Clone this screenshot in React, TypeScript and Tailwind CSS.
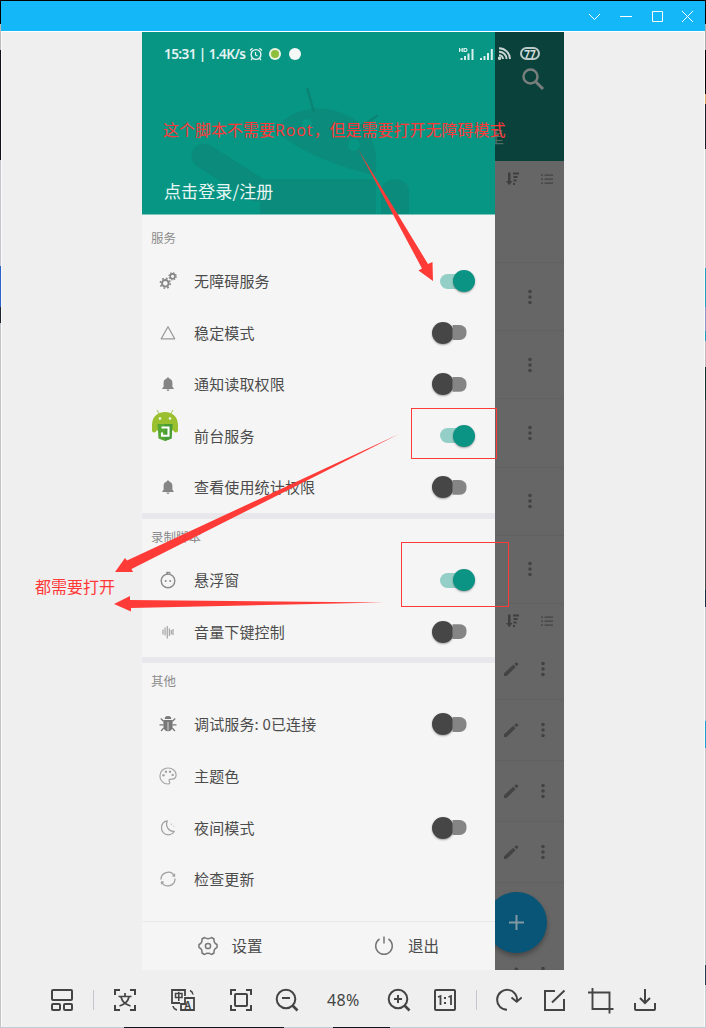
import React from "react";

type IconProps = { children: React.ReactNode; size?: number; className?: string; box?: number };

function Icon({ children, size = 18, box = 18, className = "" }: IconProps) {
  return (
    <svg
      width={size}
      height={size}
      viewBox={`0 0 ${box} ${box}`}
      fill="none"
      stroke="currentColor"
      strokeLinejoin="round"
      className={`shrink-0 ${className}`}
    >
      {children}
    </svg>
  );
}

const gears = (
  <Icon className="text-[#858585]">
    <circle cx="6.3" cy="11.3" r="3.3" strokeWidth="1.9" />
    <circle cx="6.3" cy="11.3" r="5" strokeWidth="1.5" strokeDasharray="1.8 2.13" />
    <circle cx="13.600" cy="4.3" r="2.4" strokeWidth="1.6" />
    <circle cx="13.600" cy="4.3" r="3.6" strokeWidth="1.2" strokeDasharray="1.5 1.33" />
  </Icon>
);
const triangle = (
  <Icon className="text-[#9b9b9b]">
    <path d="M9 2.8 L15.7 14.8 H2.2 Z" strokeWidth="1.3" />
  </Icon>
);
const bell = (
  <Icon className="text-[#858585]">
    <path
      d="M9 2.4c.8 0 1.3.5 1.3 1.2 2 .6 3.1 2.2 3.1 4.4v3.8l1.3 1.4v.7H3.3v-.7l1.3-1.4V8c0-2.200 1.100-3.800 3.100-4.400 0-.7.5-1.200 1.300-1.200zM7.500 14.600h3c0 .8-.6 1.300-1.500 1.300s-1.500-.5-1.500-1.300z"
      fill="currentColor"
      stroke="none"
    />
  </Icon>
);
const face = (
  <Icon className="text-[#8b8b8b]">
    <circle cx="9" cy="9.900" r="6.800" strokeWidth="1.400" />
    <path d="M9.200 3.300c-1.900-.3-2-2.200-.2-2.100 1.300 0 2.200.7 2 1.500" strokeWidth="1.400" />
    <circle cx="6.700" cy="9.900" r="1" fill="currentColor" stroke="none" />
    <circle cx="11.200" cy="9.900" r="1" fill="currentColor" stroke="none" />
  </Icon>
);
const wave = (
  <Icon className="text-[#aaaaaa]">
    <path d="M4 6.500v5M6.100 4.500v8M8.300 3v12.500M10.400 5.500v7.500M12.300 7v4.500M14 6v6" strokeWidth="1.300" />
  </Icon>
);
const bug = (
  <Icon className="text-[#777777]">
    <path d="M5.700 4.100a3.300 3.100 0 0 1 6.600 0z" fill="currentColor" stroke="none" />
    <path
      d="M4.400 5h9.200v6.500c0 2.800-2 4.800-4.600 4.800s-4.600-2-4.600-4.800z"
      fill="currentColor"
      stroke="none"
    />
    <path d="M9 7v8.500" stroke="#d9d9d9" strokeWidth="1" />
    <path d="M4.500 6.300 1.800 3.500M13.500 6.300l2.700-2.800M4.400 9.800H.5M13.600 9.800h3.900M4.800 12.800l-2.700 3.200M13.200 12.800l2.700 3.200" strokeWidth="1.300" />
  </Icon>
);
const palette = (
  <Icon className="text-[#a5a5a5]">
    <path
      d="M9 17C4.300 17 .9 13.400.9 8.900.9 4.300 4.500 1 9.100 1c4.500 0 8 3 8 6.800 0 2.700-1.900 4.400-4.100 4.400-1.500 0-2.700-.1-3 .8-.3 1 1.200 1.600.7 3-.2.700-.8 1-1.700 1z"
      strokeWidth="1.200"
    />
    <g fill="currentColor" stroke="none">
      <circle cx="4.500" cy="8.300" r="1.200" />
      <circle cx="6.900" cy="4.800" r="1.200" />
      <circle cx="11" cy="4.700" r="1.200" />
      <circle cx="13.700" cy="7.900" r="1.200" />
    </g>
  </Icon>
);
const moon = (
  <Icon className="text-[#a0a0a0]">
    <path d="M8.300 1.800C4.700 2.400 2.500 5.300 2.500 8.800c0 4.100 3 7 6.700 7 2.700 0 4.800-1.200 6.100-3.500-5.400.5-9.300-4.900-7-10.500z" strokeWidth="1.200" />
    <path d="M12.400 4.500v1.500M14.800 6.700v1" strokeWidth=".7" />
  </Icon>
);
const sync = (
  <Icon className="text-[#a0a0a0]">
    <path d="M2 9.600A7.100 7.100 0 0 1 15.300 5.900M16 8.500A7.100 7.100 0 0 1 2.700 12.200" strokeWidth="1.300" />
    <path d="M15.600 3.800v2.400l-2.400-.2M2.400 14.300v-2.400l2.400.2" strokeWidth="1.100" />
  </Icon>
);

function RobotBadge() {
  return (
    <svg width="28" height="34" viewBox="0 0 28 34" className="-mt-[19px] -ml-[8px] shrink-0">
      <path d="M6 1l3 5M22 1l-3 5" stroke="#b6cf79" strokeWidth="1.200" />
      <path d="M1 16C1 8 6.500 3 14 3s13 5 13 13v5.500c0 2.500-4 2.500-4.500 0H5.500C5 24 1 24 1 21.500z" fill="#9bc02f" />
      <circle cx="9" cy="9.500" r="1.300" fill="#f4f8e8" />
      <circle cx="19" cy="9.500" r="1.300" fill="#f4f8e8" />
      <path d="M6.500 15h15l-1 14.500L14 32l-6.500-2.500z" fill="#55a832" />
      <path d="M14 15h7.500l-1 14.500L14 32z" fill="#479c36" />
      <path d="M10.500 18.500h7v8.200l-6.500 0v-3.200" fill="none" stroke="#fff" strokeWidth="2.100" />
    </svg>
  );
}

function Toggle({ on }: { on: boolean }) {
  return on ? (
    <span className="flex h-[22px] w-[35px] items-center">
      <span className="h-[15px] w-[24px] rounded-l-full bg-[#94cfc7]" />
      <span className="-ml-[11px] size-[22px] shrink-0 rounded-full bg-[#0b9383] shadow-[0_1px_2px_rgba(0,0,0,0.35)]" />
    </span>
  ) : (
    <span className="mr-[8px] flex h-[22px] w-[35px] items-center">
      <span className="size-[22px] shrink-0 rounded-full bg-[#464646] shadow-[0_1px_2px_rgba(0,0,0,0.35)]" />
      <span className="-ml-[11px] h-[15px] w-[24px] rounded-r-full bg-[#858585] [clip-path:inset(0_0_0_10px)]" />
    </span>
  );
}

type Item = { icon: React.ReactNode; label: string; on?: boolean };

const sections: { title: string; items: Item[] }[] = [
  {
    title: "服务",
    items: [
      { icon: gears, label: "无障碍服务", on: true },
      { icon: triangle, label: "稳定模式", on: false },
      { icon: bell, label: "通知读取权限", on: false },
      { icon: <RobotBadge />, label: "前台服务", on: true },
      { icon: bell, label: "查看使用统计权限", on: false },
    ],
  },
  {
    title: "录制脚本",
    items: [
      { icon: face, label: "悬浮窗", on: true },
      { icon: wave, label: "音量下键控制", on: false },
    ],
  },
  {
    title: "其他",
    items: [
      { icon: bug, label: "调试服务: 0已连接", on: false },
      { icon: palette, label: "主题色" },
      { icon: moon, label: "夜间模式", on: false },
      { icon: sync, label: "检查更新" },
    ],
  },
];

function DrawerHeader() {
  return (
    <div className="grid h-[183px] shrink-0 overflow-hidden border-b border-[#7dc5bc] bg-[#089684]">
      <svg width="353" height="182" viewBox="142 32 353 182" className="col-start-1 row-start-1">
        <g fill="#0a8b7b">
          <path d="M204 156 L256 189" stroke="#0a8b7b" strokeWidth="25" strokeLinecap="round" fill="none" />
          <path d="M260 179h110q6 0 6 6v34H260z" />
          <path d="M381 214v-22c0-17 28-17 28 0v22z" />
          <path d="M274 129c18-20 42-24 62-18 26 8 43 25 40 61l-7 2c-35-9-72-23-95-45z" />
        </g>
        <path d="M307.500 89l6 22M377 116l-20 13" stroke="#0a8475" strokeWidth="2.600" strokeLinecap="round" />
        <circle cx="307" cy="124" r="5" fill="#089684" />
        <circle cx="354" cy="145" r="6" fill="#089684" />
      </svg>
      <div className="col-start-1 row-start-1 flex flex-col justify-between pl-[22px]">
        <div className="mt-[11px] flex h-[22px] items-center text-white/90">
          <span className="w-[83px] whitespace-nowrap font-['Noto_Sans','Noto_Sans_CJK_SC',sans-serif] text-[13.500px] leading-[22px] font-semibold tracking-[-0.550px]">
            15:31 | 1.4K/s
          </span>
          <Icon size={14} box={14} className="ml-[2px]">
            <circle cx="7" cy="7.500" r="4.900" strokeWidth="1.400" />
            <path d="M6.500 5v3l2 1M1 3.500 3.600 1.200M13 3.500l-2.600-2.300M3.300 11.500 2 13M10.700 11.500 12 13" strokeWidth="1.200" />
          </Icon>
          <span className="ml-[6px] flex size-[12px] items-center justify-center rounded-full bg-[#edf3e0]">
            <span className="size-[8px] rounded-full bg-[#8fbe3b]" />
          </span>
          <span className="ml-[8px] size-[12px] rounded-full bg-[#f5f8f7]" />
          <svg width="36" height="14" viewBox="0 0 36 14" className="ml-[158px] fill-white/85">
            <path d="M1.500 13h2v-2h-2zM5 13h2V9H5zM8.500 13h2V6.500h-2zM12.500 13h2V2h-2zM21 13h2v-2h-2zM24.500 13h2V9h-2zM28 13h2V6h-2zM31.800 13h2V2h-2z" />
            <path d="M.5 1v4M3.200 1v4M.5 3h2.700M5 1.500h1.500q1.500 0 1.500 1.500t-1.500 1.500H5z" fill="none" stroke="#dff2ef" strokeWidth="1.200" />
          </svg>
        </div>
        <div className="mb-[11px] text-[17px] leading-[24px] tracking-[0.1px] text-[#e9f6f4]">点击登录/注册</div>
      </div>
    </div>
  );
}

function Drawer() {
  return (
    <div className="flex w-[353px] shrink-0 flex-col bg-[#f5f5f5]">
      <DrawerHeader />
      {sections.map((s, i) => (
        <div key={s.title} className={i === 0 ? "pt-[5px]" : "border-t-[6px] border-[#e8e8ec]"}>
          <div className="flex h-[35.300px] items-center pt-px pl-[9px] text-[12.500px] text-[#8d8d8d]">{s.title}</div>
          {s.items.map((it) => (
            <div key={it.label} className="flex h-[51.550px] items-center pr-[20.500px] pl-[17px]">
              <span className="flex w-[18px] items-center">{it.icon}</span>
              <span className="ml-[17px] flex-1 text-[15px] leading-[22px] tracking-[0.150px] text-[#4c4c4c]">{it.label}</span>
              {it.on !== undefined && <Toggle on={it.on} />}
            </div>
          ))}
        </div>
      ))}
      <div className="mt-auto flex h-[49px] items-center border-t border-[#e9e9e9] text-[15.500px] text-[#4c4c4c]">
        <Icon size={20} box={20} className="ml-[56px] text-[#777]">
          <path d="M6.500 1.500 Q10 4 13.500 1.500 L16 3 Q15.500 7 19 8.500 V11.500 Q15.500 13 16 17 L13.500 18.500 Q10 16 6.500 18.500 L4 17 Q4.500 13 1 11.500 V8.500 Q4.500 7 4 3 Z" strokeWidth="1.500" />
          <circle cx="10" cy="10" r="2.600" strokeWidth="1.500" />
        </Icon>
        <span className="ml-[13.500px] w-[31.500px]">设置</span>
        <Icon size={20} box={20} className="ml-[111px] text-[#777]">
          <path d="M5.500 3A8.300 8.300 0 1 0 14.500 3M10 .5V7.500" strokeWidth="1.500" />
        </Icon>
        <span className="ml-[14px]">退出</span>
      </div>
    </div>
  );
}

function Dots() {
  return (
    <svg width="6" height="16" viewBox="0 0 6 16" className="fill-[#434343]">
      <circle cx="3" cy="2.500" r="1.800" />
      <circle cx="3" cy="8" r="1.800" />
      <circle cx="3" cy="13.500" r="1.800" />
    </svg>
  );
}

function Pencil() {
  return (
    <svg width="16" height="16" viewBox="0 0 16 16" className="fill-[#444]">
      <path d="M1 12.300 10.200 3.800l2.400 2.500L3.600 15H1zM11.200 2.900l1.500-1.500q.6-.5 1.200 0l1.200 1.200q.5.600 0 1.200l-1.500 1.500z" />
    </svg>
  );
}

function SortBar() {
  return (
    <div className="flex h-[35px] shrink-0 items-center pl-[11px]">
      <svg width="14" height="14" viewBox="0 0 14 14" className="fill-[#3f3f3f]">
        <path d="M2 .5h2.500V9h2L3.300 13.200 0 9h2zM7 .5h6v2H7zM7.500 4h4v2h-4zM7.500 7.500h3v2h-3zM7 11h2v2H7z" />
      </svg>
      <svg width="12" height="12" viewBox="0 0 12 12" className="ml-[21px] fill-[#434343]">
        <path d="M0 1.500h2v1.200H0zM3.500 1.500H12v1.200H3.500zM0 5.500h2v1.200H0zM3.500 5.500H12v1.200H3.500zM0 9.500h2v1.200H0zM3.500 9.500H12v1.200H3.500z" />
      </svg>
    </div>
  );
}

function DimmedPage() {
  return (
    <div className="flex w-[69px] flex-col overflow-hidden bg-[#666]">
      <div className="flex h-[129px] shrink-0 flex-col bg-[#0a423b]">
        <div className="mt-[13px] flex h-[17px] items-center pl-[3px]">
          <svg width="13" height="13" viewBox="0 0 13 13" fill="none" stroke="#c9d5d3" strokeWidth="1.900">
            <path d="M1 1.200A11 11 0 0 1 12 12M1 4.700A7.400 7.400 0 0 1 8.500 12M1 8.200A4 4 0 0 1 5 12" />
            <circle cx="1.500" cy="11.300" r=".8" />
          </svg>
          <span className="ml-[9px] flex h-[13px] w-[20px] items-center justify-center rounded-full border-[2px] border-[#bccbc9] font-['Noto_Sans',sans-serif] text-[10px] leading-none font-bold text-[#d7dfde]">
            77
          </span>
        </div>
        <svg width="24" height="24" viewBox="0 0 24 24" fill="none" stroke="#777e7c" strokeWidth="2.500" className="mt-[5px] ml-[26px]">
          <circle cx="9.500" cy="9.500" r="7" />
          <path d="M14.500 14.500 22 22" strokeWidth="3" />
        </svg>
        <span className="mt-[33px] -ml-[7px] text-[16px] leading-[24px] text-[#49716b]">里</span>
      </div>
      <SortBar />
      <div className="h-[67px] shrink-0 border-b border-[#616161]" />
      {[0, 1, 2, 3, 4].map((n) => (
        <div key={n} className="flex h-[68.200px] shrink-0 items-center border-b border-[#616161] pl-[31.500px]">
          <Dots />
        </div>
      ))}
      <SortBar />
      {[0, 1, 2, 3].map((n) => (
        <div key={n} className="flex h-[61px] shrink-0 items-center border-b border-[#616161] pl-[8px]">
          <Pencil />
          <span className="ml-[20.500px]">
            <Dots />
          </span>
        </div>
      ))}
      <div className="mt-[9px] -ml-[9px] flex size-[61px] shrink-0 items-center justify-center rounded-full bg-[#085577] shadow-[0_3px_5px_rgba(0,0,0,0.3)]">
        <svg width="15" height="15" viewBox="0 0 15 15" stroke="#8298a2" strokeWidth="2">
          <path d="M7.500 0v15M0 7.500h15" />
        </svg>
      </div>
      <div className="mt-[13px] flex shrink-0 items-start pl-[8px]">
        <Pencil />
        <span className="ml-[20.500px]">
          <Dots />
        </span>
      </div>
    </div>
  );
}

function ToolIcon({ children, gap }: { children: React.ReactNode; gap: string }) {
  return (
    <svg width="24" height="24" viewBox="0 0 24 24" fill="none" stroke="#444" strokeWidth="2" className={`shrink-0 ${gap}`}>
      {children}
    </svg>
  );
}

function Toolbar() {
  return (
    <div className="flex h-[57px] shrink-0 items-center pt-[3px] text-[#444]">
      <ToolIcon gap="ml-[48px]">
        <rect x="2" y="2" width="20" height="10" rx="1" />
        <rect x="2" y="16" width="8" height="6" rx="1" />
        <rect x="14" y="16" width="8" height="6" rx="1" />
      </ToolIcon>
      <span className="ml-[19px] h-[20px] w-px bg-[#c3c5d0]" />
      <ToolIcon gap="ml-[19px]">
        <path d="M7 2H2v5M17 2h5v5M2 17v5h5M22 17v5h-5" />
        <path d="M12 5v3M5.500 8.500h13M8 9c1 4 4.500 7.500 9.500 9M16 9c-1 4-4.500 7.500-9.500 9" strokeWidth="1.700" />
      </ToolIcon>
      <ToolIcon gap="ml-[34px]">
        <path d="M14 8V2H1v13h8M14 10h9v12H10v-6h4z" strokeWidth="1.800" />
        <path d="M4.500 5.500h6.500v4H4.500zM7.750 3.800V13M19 2.500q2.500 1 3 4M2 18q.5 3 4 4" strokeWidth="1.500" />
        <text x="13.500" y="20.500" fontSize="10" fontWeight="700" fill="#444" stroke="none">A</text>
      </ToolIcon>
      <ToolIcon gap="ml-[34px]">
        <path d="M7 2H2v5M17 2h5v5M2 17v5h5M22 17v5h-5" />
        <rect x="6" y="6" width="12" height="12" rx="1" />
      </ToolIcon>
      <ToolIcon gap="ml-[22px]">
        <circle cx="11" cy="11" r="9.300" />
        <path d="M7 10h8" />
        <path d="M17.500 17.500l5 5" strokeWidth="2.600" />
      </ToolIcon>
      <span className="ml-[28px] w-[34px] whitespace-nowrap font-['Noto_Sans',sans-serif] text-[16px] leading-[20px] tracking-[0.300px]">48%</span>
      <ToolIcon gap="ml-[26px]">
        <circle cx="11" cy="11" r="9.300" />
        <path d="M7 11h8M11 7v8" />
        <path d="M17.500 17.500l5 5" strokeWidth="2.600" />
      </ToolIcon>
      <ToolIcon gap="ml-[22px]">
        <rect x="2" y="2" width="20" height="20" rx="1" />
        <path d="M5 9 7.500 8v9M15.500 9 18 8v9" strokeWidth="1.800" />
        <path d="M12 9v2M12 14v2" />
      </ToolIcon>
      <span className="ml-[19px] h-[20px] w-px bg-[#c3c5d0]" />
      <svg width="28" height="24" viewBox="0 0 28 24" fill="none" stroke="#444" strokeWidth="2" className="ml-[17px] shrink-0">
        <path d="M13 21.800A10 10 0 1 1 23 13.500M17.500 9.500l5.200 4.200 5-4.200" />
      </svg>
      <ToolIcon gap="ml-[21px]">
        <path d="M12 3H2v19h19V11M9 14.500 21.500 2.500" />
      </ToolIcon>
      <svg width="27" height="27" viewBox="0 0 27 27" fill="none" stroke="#444" strokeWidth="1.900" className="ml-[20px] shrink-0">
        <path d="M5.500 1v21H26.500M1 5.500h21.500V26.500" />
      </svg>
      <ToolIcon gap="ml-[19px]">
        <path d="M2 15v6q0 1 1 1h18q1 0 1-1v-6M12 1v13M7 10l5 5 5-5" />
      </ToolIcon>
    </div>
  );
}

function Annotations() {
  return (
    <div className="pointer-events-none absolute inset-0 font-['Open_Sans','Noto_Sans_CJK_SC',sans-serif] text-[16px] leading-[20px] text-[#ff3838]">
      <svg width="706" height="1028" viewBox="0 0 706 1028" fill="#ff3b38" className="absolute inset-0">
        <path d="M358 149 428 264 432.500 262 433 281 418.500 270.500 422 268.500Z" />
        <path d="M399 434 127 560.500 125 558 115 572H133L131.500 569Z" />
        <path d="M383 602.500 130 600V596L114 604 131 611.500V608Z" />
        <g fill="none" stroke="#ff3b38">
          <rect x="411.500" y="408.500" width="85" height="50" />
          <rect x="401.500" y="542.500" width="107" height="64" />
        </g>
      </svg>
      <span className="absolute top-[120px] left-[163px] whitespace-nowrap">这个脚本不需要<span className="tracking-[0.900px]">Root</span>，但是需要打开无障碍模式</span>
      <span className="absolute top-[577px] left-[35px] whitespace-nowrap">都需要打开</span>
    </div>
  );
}

function LeftEdge() {
  return (
    <div className="flex w-px shrink-0 flex-col bg-[#c3c4c8]">
      <span className="h-[24px] bg-black" />
      <span className="h-[26px] bg-[#bbbbbb]" />
      <span className="h-[110px] bg-[#10111c]" />
      <span className="h-[106px] bg-[#c2c5ca]" />
      <span className="h-[41px] bg-[#2b62c8]" />
      <span className="h-[16px] bg-[#1c2530]" />
    </div>
  );
}

function RightEdge() {
  return (
    <div className="flex w-px shrink-0 flex-col bg-[#c8ccd0]">
      <span className="h-[24px] bg-black" />
      <span className="h-[26px] bg-[#aaaaaa]" />
      <span className="h-[44px] bg-black" />
      <span className="h-[10px] bg-[#d8a860]" />
      <span className="h-[45px] bg-[#1a1c2c]" />
      <span className="h-[119px] bg-[#cccccc]" />
      <span className="h-[39px] bg-[#22a0c0]" />
      <span className="h-[24px] bg-[#8a98c8]" />
      <span className="h-[10px] bg-[#1a9fc0]" />
      <span className="h-[26px] bg-[#c0b8b8]" />
      <span className="h-[33px] bg-[#0c3030]" />
      <span className="h-[190px] bg-[#4a4a4e]" />
      <span className="h-[17px] bg-[#103040]" />
      <span className="h-[114px] bg-[#c4c4c8]" />
      <span className="h-[27px] bg-[#1a9fd0]" />
      <span className="h-[217px] bg-[#c4c4c8]" />
      <span className="h-[20px] bg-[#204050]" />
    </div>
  );
}

export default function App() {
  return (
    <div className="relative flex h-[1028px] w-[706px] overflow-hidden font-['Noto_Sans_CJK_SC',sans-serif]">
      <LeftEdge />
      <div className="flex w-[704px] shrink-0 flex-col border-t border-black bg-[#efefef]">
        <div className="flex h-[31px] shrink-0 items-center justify-end border-b border-white bg-[#14b7f8] pr-[12px]">
          <svg width="104" height="13" viewBox="0 0 104 13" fill="none" stroke="#fff" strokeWidth="1">
            <path d="M0 4l5.500 5.500L11 4M31 6.500h12M63.500 1.500h10v10h-10zM93 1l11 11M104 1L93 12" />
          </svg>
        </div>
        <div className="flex min-h-0 flex-1 flex-col border-x border-[#fafafa]">
          <div className="ml-[140px] flex h-[938px] w-[422px] shrink-0 overflow-hidden">
            <Drawer />
            <DimmedPage />
          </div>
          <Toolbar />
        </div>
        <div className="flex h-px shrink-0 bg-[#c4cbd3]">
          <span className="ml-[123px] w-[160px] bg-[#10151c]" />
          <span className="ml-[49px] w-[57px] bg-[#10151c]" />
        </div>
      </div>
      <RightEdge />
      <Annotations />
    </div>
  );
}
